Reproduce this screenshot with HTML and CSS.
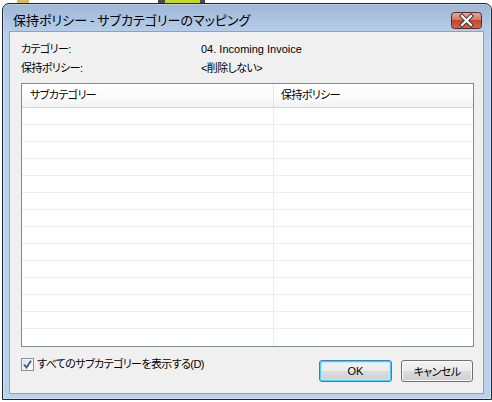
FILE: index.html
```html
<!DOCTYPE html>
<html lang="ja">
<head>
  <meta charset="UTF-8" />
  <title>保持ポリシー - サブカテゴリーのマッピング</title>
  <link rel="stylesheet" href="styles.css">
</head>
<body>

  <!-- bits of the desktop behind the dialog -->
  <div class="desk-item desk-yellow"></div>
  <div class="desk-item desk-green"></div>

  <div class="window">
    <!-- Title bar -->
    <div class="titlebar">
      <span class="title">保持ポリシー - サブカテゴリーのマッピング</span>
      <button class="close" title="閉じる">
        <svg width="31" height="17" viewBox="0 0 31 17">
          <defs>
            <linearGradient id="closeBg" x1="0" y1="0" x2="0" y2="1">
              <stop offset="0" stop-color="#e8aa9c" />
              <stop offset="0.45" stop-color="#d47a68" />
              <stop offset="0.5" stop-color="#c2452e" />
              <stop offset="1" stop-color="#cf6a4f" />
            </linearGradient>
          </defs>
          <rect x="0.5" y="0.5" width="30" height="16" rx="3" fill="url(#closeBg)" stroke="#5a2a2a" />
          <path d="M11 4 L20 13 M20 4 L11 13" stroke="#3b3b3b" stroke-width="4.2" stroke-linecap="square" />
          <path d="M11 4 L20 13 M20 4 L11 13" stroke="#ffffff" stroke-width="2.2" stroke-linecap="square" />
        </svg>
      </button>
    </div>

    <!-- Client area -->
    <div class="client">
      <div class="info">
        <div class="info-row">
          <span class="info-label">カテゴリー:</span>
          <span class="info-value latin">04. Incoming Invoice</span>
        </div>
        <div class="info-row">
          <span class="info-label">保持ポリシー:</span>
          <span class="info-value">&lt;削除しない&gt;</span>
        </div>
      </div>

      <div class="list">
        <div class="list-head">
          <div class="cell cell-sub">サブカテゴリー</div>
          <div class="cell cell-policy">保持ポリシー</div>
        </div>
        <div class="list-row"><div class="cell cell-sub"></div><div class="cell cell-policy"></div></div>
        <div class="list-row"><div class="cell cell-sub"></div><div class="cell cell-policy"></div></div>
        <div class="list-row"><div class="cell cell-sub"></div><div class="cell cell-policy"></div></div>
        <div class="list-row"><div class="cell cell-sub"></div><div class="cell cell-policy"></div></div>
        <div class="list-row"><div class="cell cell-sub"></div><div class="cell cell-policy"></div></div>
        <div class="list-row"><div class="cell cell-sub"></div><div class="cell cell-policy"></div></div>
        <div class="list-row"><div class="cell cell-sub"></div><div class="cell cell-policy"></div></div>
        <div class="list-row"><div class="cell cell-sub"></div><div class="cell cell-policy"></div></div>
        <div class="list-row"><div class="cell cell-sub"></div><div class="cell cell-policy"></div></div>
        <div class="list-row"><div class="cell cell-sub"></div><div class="cell cell-policy"></div></div>
        <div class="list-row"><div class="cell cell-sub"></div><div class="cell cell-policy"></div></div>
        <div class="list-row"><div class="cell cell-sub"></div><div class="cell cell-policy"></div></div>
        <div class="list-row"><div class="cell cell-sub"></div><div class="cell cell-policy"></div></div>
        <div class="list-row last"><div class="cell cell-sub"></div><div class="cell cell-policy"></div></div>
      </div>

      <div class="footer">
        <label class="check">
          <span class="check-box">
            <svg width="9" height="9" viewBox="0 0 9 9">
              <path d="M1 4.5 L3.5 7.5 L8 0.8" fill="none" stroke="#3d55a0" stroke-width="1.9" />
            </svg>
          </span>
          <span class="check-label">すべてのサブカテゴリーを表示する(D)</span>
        </label>
        <div class="buttons">
          <button class="btn btn-default latin">OK</button>
          <button class="btn btn-cancel">キャンセル</button>
        </div>
      </div>
    </div>
  </div>

</body>
</html>
```

FILE: styles.css
```css
body {
  margin: 0;
  padding: 0;
  width: 492px;
  height: 402px;
  overflow: hidden;
  position: relative;
  background-color: #ffffff;
  font-family: "Liberation Sans", "Noto Sans CJK JP", sans-serif;
  font-size: 11px;
  font-feature-settings: "palt";
  letter-spacing: -0.6px;
  color: #000;
}

.latin {
  letter-spacing: 0;
}

.desk-item {
  position: absolute;
  top: 0;
  height: 3px;
}

.desk-yellow {
  left: 17px;
  width: 12px;
  background-color: #d8b860;
}

.desk-green {
  left: 158px;
  width: 47px;
  background: linear-gradient(90deg, #4a4a4a 0, #4a4a4a 7px, #c6d820 7px, #c6d820 42px, #4a4a4a 42px);
}

.window {
  box-sizing: border-box;
  width: 490px;
  height: 397px;
  margin: 3px 0 0 2px;
  padding: 0 7px 5px 6px;
  border: 1px solid #1d2733;
  border-radius: 7px 7px 0 0;
  background: linear-gradient(#9db7d6 0, #b4cce7 26px, #b9d1ea 40px, #b9d1ea 100%);
  box-shadow: inset 0 0 0 1px rgba(255, 255, 255, 0.35);
}

.titlebar {
  display: flex;
  justify-content: space-between;
  align-items: center;
  height: 27px;
  padding-top: 5px;
  box-sizing: border-box;
  margin-left: -6px;
  margin-right: -7px;
  padding-left: 10px;
  padding-right: 9px;
}

.title {
  font-family: "Noto Sans CJK JP", sans-serif;
  font-size: 13px;
  line-height: 16px;
  letter-spacing: 0;
  color: #000;
}

.close {
  width: 31px;
  height: 17px;
  padding: 0;
  border: none;
  background: none;
  display: block;
}

.close svg {
  display: block;
}

.client {
  box-sizing: border-box;
  height: 363px;
  padding: 8px 9px 0 11px;
  border: 1px solid #8fa2b8;
  background-color: #f0f0f0;
}

.info-row {
  display: flex;
  height: 19px;
  line-height: 19px;
}

.info-label {
  width: 180px;
}

.list {
  margin-top: 5px;
  height: 264px;
  box-sizing: border-box;
  border: 1px solid #828790;
  background-color: #ffffff;
}

.list-head,
.list-row {
  display: flex;
}

.list-head {
  height: 24px;
  box-sizing: border-box;
  border-bottom: 1px solid #d5d5d5;
  background: linear-gradient(#ffffff 0, #fbfbfb 60%, #f1f2f4 100%);
  line-height: 23px;
}

.list-row {
  height: 17px;
  box-sizing: border-box;
  border-bottom: 1px solid #ededed;
}

.list-row.last {
  border-bottom: none;
}

.cell-sub {
  width: 252px;
  box-sizing: border-box;
  padding-left: 8px;
  border-right: 1px solid #ededed;
}

.list-head .cell-sub {
  border-right-color: #e3e4e6;
}

.cell-policy {
  flex: 1;
  padding-left: 7px;
}

.footer {
  display: flex;
  justify-content: space-between;
  align-items: flex-start;
}

.check {
  display: flex;
  align-items: center;
  margin-top: 11px;
  height: 13px;
  line-height: 13px;
}

.check-box {
  box-sizing: border-box;
  width: 13px;
  height: 13px;
  border: 1px solid #8e8f8f;
  background: linear-gradient(135deg, #dcdcdc 0, #f4f4f4 60%, #ffffff 100%);
  box-shadow: inset 0 0 0 1px #f4f4f4;
  display: flex;
  align-items: center;
  justify-content: center;
  margin-right: 3px;
}

.check-box svg {
  display: block;
}

.buttons {
  display: flex;
  gap: 9px;
  margin-top: 13px;
  margin-right: 1px;
}

.btn {
  box-sizing: border-box;
  width: 73px;
  height: 22px;
  padding: 0;
  border: 1px solid #707070;
  border-radius: 3px;
  background: linear-gradient(#f2f2f2 0, #ebebeb 50%, #dddddd 50%, #cfcfcf 100%);
  box-shadow: inset 0 0 0 1px #fcfcfc;
  font-family: "Liberation Sans", "Noto Sans CJK JP", sans-serif;
  font-size: 11px;
  font-feature-settings: "palt";
  letter-spacing: -0.6px;
  color: #000;
}

.btn.latin {
  letter-spacing: 0;
}

.btn-default {
  border-color: #3c7fb1;
  box-shadow: inset 0 0 0 1px #48d0ff, inset 0 0 0 2px #c0e8fa;
}

.btn-cancel {
  width: 72px;
}
```
